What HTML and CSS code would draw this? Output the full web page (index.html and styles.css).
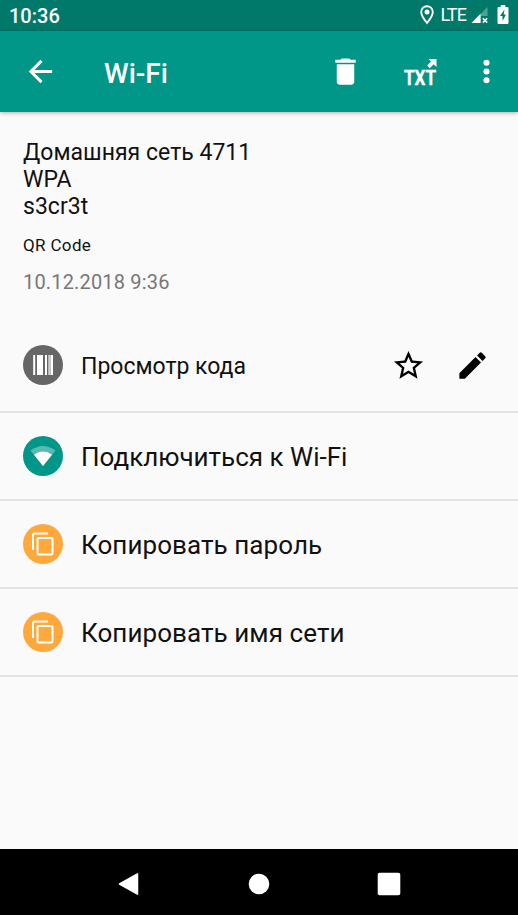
FILE: index.html
```html
<!DOCTYPE html>
<html lang="ru">
<head>
<meta charset="utf-8">
<title>Wi-Fi</title>
<link rel="stylesheet" href="styles.css">
</head>
<body>
<div class="screen">
  <div class="status">
    <span class="clock">10:36</span>
    <svg class="pin" width="14" height="20" viewBox="0 0 14 20"><path d="M7 1.2C3.7 1.2 1.2 3.7 1.2 7c0 4.100 5.800 11 5.800 11s5.800-6.900 5.800-11C12.800 3.700 10.300 1.200 7 1.200z" fill="none" stroke="#fff" stroke-width="1.900"/><circle cx="7" cy="7" r="2.500" fill="#fff"/></svg>
    <span class="lte">LTE</span>
    <svg class="signal" width="18" height="17" viewBox="0 0 18 17"><path d="M16.500 0v9H10v7H.5z" fill="#fff" opacity=".3"/><path d="M9.500 6.800V16H.5z" fill="#fff"/><path d="M11.800 11.200l4.400 4.400m0-4.400l-4.400 4.400" stroke="#fff" stroke-width="1.500"/></svg>
    <svg class="battery" width="12" height="20" viewBox="0 0 12 20"><path d="M3.700 0h4.600v2h2q1.200 0 1.200 1.200v14.600q0 1.200-1.200 1.200H1.700Q.5 19 .5 17.800V3.200Q.5 2 1.700 2h2z" fill="#fff"/><path d="M7.500 4.500L3 11h2.500v5L9 9.500H6.700z" fill="#00796b"/></svg>
  </div>
  <header class="appbar">
    <svg class="icon back" viewBox="0 0 24 24"><path d="M20 11H7.830l5.590-5.590L12 4l-8 8 8 8 1.410-1.410L7.830 13H20z"/></svg>
    <h1 class="title">Wi-Fi</h1>
    <svg class="icon trash" viewBox="0 0 24 24"><path d="M6 19c0 1.100.9 2 2 2h8c1.100 0 2-.9 2-2V7H6zM19 4h-3.500l-1-1h-5l-1 1H5v2h14z"/></svg>
    <svg class="export" width="34" height="32" viewBox="0 0 34 32"><text x="0" y="28.500" textLength="32" lengthAdjust="spacingAndGlyphs">TXT</text><path d="M24.500 3H32.500v8l-2.800-2.800-4 4-2.600-2.600 4-4z"/></svg>
    <svg class="icon more" viewBox="0 0 24 24"><circle cx="12" cy="6" r="2.100"/><circle cx="12" cy="12" r="2.100"/><circle cx="12" cy="18" r="2.100"/></svg>
  </header>
  <main class="content">
    <section class="details">
      <p class="data"><span class="network">Домашняя сеть 4711</span><br><span class="security">WPA</span><br><span class="secret">s3cr3t</span></p>
      <p class="format">QR Code</p>
      <p class="date">10.12.2018 9:36</p>
    </section>
    <div class="row view">
      <svg class="badge" viewBox="0 0 40 40"><circle cx="20" cy="20" r="20" fill="#666"/><path fill="#fff" d="M10.200 10h2v20h-2zM14 10h6v20h-6zM22 10h2v20h-2zM25.500 10h4.500v20h-4.500z"/><path fill="#666" d="M26.700 10h.7v20h-.7z"/></svg>
      <span class="label">Просмотр кода</span>
      <svg class="icon star" viewBox="0 0 24 24"><path d="M22 9.240l-7.190-.62L12 2 9.190 8.630 2 9.240l5.460 4.730L5.820 21 12 17.270 18.180 21l-1.630-7.030zM12 15.400l-3.760 2.270 1-4.280-3.320-2.880 4.380-.38L12 6.100l1.710 4.040 4.380.38-3.320 2.880 1 4.280z"/></svg>
      <svg class="icon edit" viewBox="0 0 24 24"><path d="M3 17.250V21h3.750L17.810 9.940l-3.750-3.750zM20.710 7.040a1 1 0 0 0 0-1.410l-2.340-2.340a1 1 0 0 0-1.410 0l-1.830 1.830 3.750 3.750z"/></svg>
    </div>
    <div class="row">
      <svg class="badge" viewBox="0 0 40 40"><circle cx="20" cy="20" r="20" fill="#009688"/><path d="M7.500 14.500Q20 5.500 32.500 14.500L20 30z" fill="#fff" opacity=".35"/><path d="M11 18.700Q20 12.500 29 18.700L20 30z" fill="#fff"/></svg>
      <span class="label connect">Подключиться к Wi-Fi</span>
    </div>
    <div class="row">
      <svg class="badge" viewBox="0 0 40 40"><circle cx="20" cy="20" r="20" fill="#ffa93d"/><g fill="none" stroke="#fff" stroke-width="2"><path d="M10 26V11q0-1.500 1.500-1.500H25"/><rect x="14.500" y="14" width="15" height="16.500" rx="1"/></g></svg>
      <span class="label password">Копировать пароль</span>
    </div>
    <div class="row">
      <svg class="badge" viewBox="0 0 40 40"><circle cx="20" cy="20" r="20" fill="#ffa93d"/><g fill="none" stroke="#fff" stroke-width="2"><path d="M10 26V11q0-1.500 1.500-1.500H25"/><rect x="14.500" y="14" width="15" height="16.500" rx="1"/></g></svg>
      <span class="label name">Копировать имя сети</span>
    </div>
  </main>
  <nav class="navbar">
    <svg width="24" height="24" viewBox="0 0 24 24"><path d="M2.500 12L20.500 1.800v20.400z" stroke="#fff" stroke-width="1.500" stroke-linejoin="round"/></svg>
    <svg width="24" height="24" viewBox="0 0 24 24"><circle cx="12" cy="12" r="10.300"/></svg>
    <svg width="24" height="24" viewBox="0 0 24 24"><rect x=".7" y=".7" width="22.600" height="22.600" rx="2"/></svg>
  </nav>
</div>
</body>
</html>
```
FILE: styles.css
```css
* { box-sizing: border-box; }
body { margin: 0; background: #fafafa; color: #111; font-family: Roboto, sans-serif; }
p, h1 { margin: 0; }
svg { display: block; flex: none; }
.screen { display: flex; flex-direction: column; width: 518px; height: 915px; }
.status { display: flex; align-items: center; height: 31px; padding: 0 9px; background: #00796b; color: #fff; }
.clock { margin-right: auto; font-size: 20px; font-weight: 500; }
.pin { margin-top: -2px; }
.lte { margin: -2px 5px 0 6px; font-size: 18px; letter-spacing: -0.9px; }
.signal { margin-top: 0; }
.battery { margin: -1px 0 0 8px; }
.appbar { display: flex; align-items: center; height: 81px; padding: 0 14px 0 23px; background: #009688; color: #fff; fill: currentColor; box-shadow: 0 1px 4px rgba(0, 0, 0, .3); z-index: 1; }
.icon { width: 35px; height: 35px; }
.title { margin: 5px auto 0 46px; font-size: 28px; font-weight: 500; line-height: 36px; }
.export { margin: 0 31px 0 41px; overflow: visible; }
.export text { font: 700 20px Roboto, sans-serif; stroke: #fff; stroke-width: .4px; }
.content { flex: 1; }
.details { height: 207px; padding: 26.500px 23px 0; }
.data { font-size: 23px; line-height: 27.400px; letter-spacing: .02px; }
.format { margin-top: 14px; font-size: 17px; line-height: 20px; letter-spacing: .35px; }
.date { margin-top: 15px; font-size: 20px; line-height: 24px; letter-spacing: .17px; color: #777; }
.row { display: flex; align-items: center; height: 88px; padding: 0 29px 0 23px; border-bottom: 2px solid #e2e2e2; }
.view { height: 94px; }
.badge { width: 40px; height: 40px; }
.label { margin-left: 18px; padding-top: 2px; font-size: 26px; line-height: 32px; letter-spacing: .07px; }
.view .label { margin-right: auto; padding-top: 3px; font-size: 23px; letter-spacing: 0; }
.connect { letter-spacing: 0; }
.star { margin-right: 29px; }
.edit { margin-right: -1px; }
.navbar { display: flex; align-items: center; justify-content: space-between; height: 66px; padding: 4px 117px 0; background: #000; fill: #fff; }
```
